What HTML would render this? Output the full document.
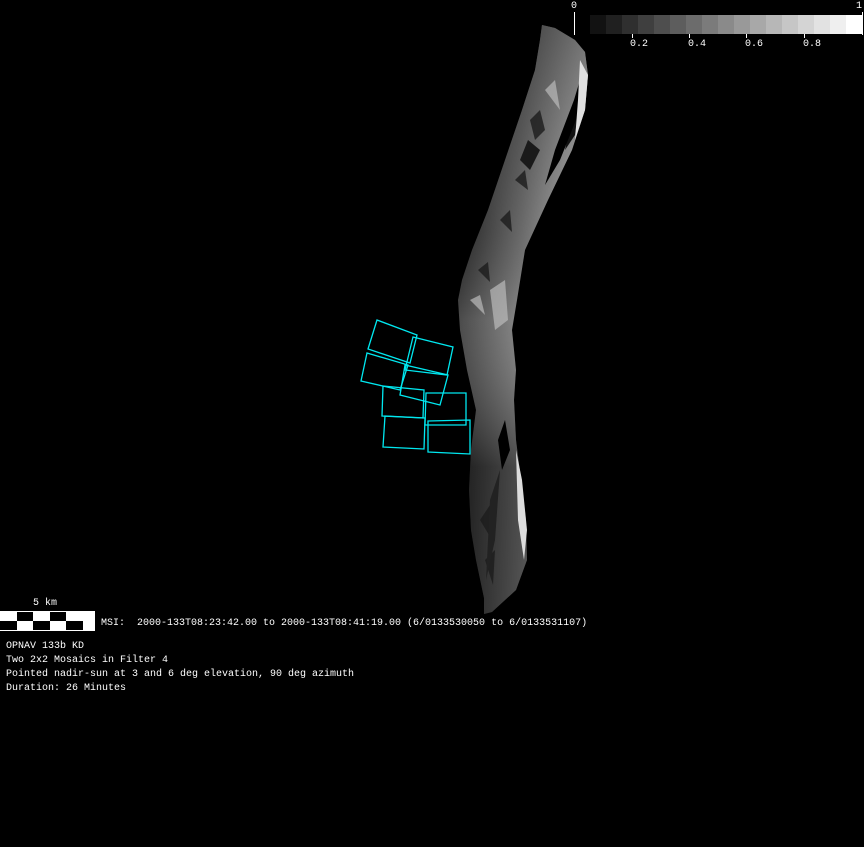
<!DOCTYPE html>
<html><head><meta charset="utf-8"><style>
html,body{margin:0;padding:0;background:#000;width:864px;height:847px;overflow:hidden}
.t{position:absolute;color:#fff;font-family:"Liberation Mono","DejaVu Sans Mono",monospace;font-size:10px;letter-spacing:0px;white-space:pre;line-height:14px}
</style></head><body>
<svg width="864" height="847" style="position:absolute;left:0;top:0" xmlns="http://www.w3.org/2000/svg">
<defs>
<linearGradient id="g" x1="0" y1="0" x2="1" y2="0">
<stop offset="0" stop-color="#2a2a2a"/><stop offset="0.5" stop-color="#777"/><stop offset="1" stop-color="#cfcfcf"/>
</linearGradient>
<linearGradient id="g2" x1="0" y1="0" x2="0" y2="1">
<stop offset="0" stop-color="#000" stop-opacity="0.45"/><stop offset="0.35" stop-color="#000" stop-opacity="0.1"/><stop offset="0.5" stop-color="#fff" stop-opacity="0.15"/><stop offset="0.75" stop-color="#000" stop-opacity="0.35"/><stop offset="1" stop-color="#000" stop-opacity="0.3"/>
</linearGradient>
</defs>
<polygon fill="url(#g)" points="542,25 555,28 575,40 585,52 588,75 585,110 572,150 548,200 525,250 517,300 512,330 516,370 514,400 516,440 521,480 526,520 527,560 516,590 492,612 484,614 484,598 476,560 471,530 469,490 471,450 476,410 467,370 460,330 458,300 462,280 472,250 488,210 505,160 522,110 535,70 540,40"/>
<polygon fill="url(#g2)" points="542,25 555,28 575,40 585,52 588,75 585,110 572,150 548,200 525,250 517,300 512,330 516,370 514,400 516,440 521,480 526,520 527,560 516,590 492,612 484,614 484,598 476,560 471,530 469,490 471,450 476,410 467,370 460,330 458,300 462,280 472,250 488,210 505,160 522,110 535,70 540,40"/>
<g fill="#1c1c1c" opacity="0.8">
<polygon points="530,120 540,110 545,130 535,140"/>
<polygon points="515,180 525,170 528,190"/>
<polygon points="500,220 510,210 512,232"/>
<polygon points="478,270 488,262 490,282"/>
<polygon points="480,520 490,505 492,540"/>
<polygon points="485,560 495,550 493,585"/>
</g>
<g fill="#bbb" opacity="0.7">
<polygon points="490,290 505,280 508,320 495,330"/>
<polygon points="470,300 480,295 485,315"/>
<polygon points="545,90 555,80 560,110"/>
</g>
<polygon fill="#111" points="572,115 580,100 575,135 565,150"/>
<polygon fill="#000" points="574,100 583,70 580,110 560,160 545,185 555,150"/>
<polygon fill="#000" points="515,330 520,300 530,260 540,225 525,285"/>
<polygon fill="#000" points="498,440 505,420 510,450 502,470"/>
<polygon fill="#222" points="490,500 500,470 495,540 486,580"/>
<polygon fill="#1a1a1a" points="528,140 540,150 530,170 520,160"/>
<polygon fill="#e0e0e0" points="580,60 588,75 585,110 575,140 578,100"/>
<polygon fill="#ddd" points="516,450 522,480 527,530 524,560 518,520"/>
<g fill="none" stroke="#00e8f0" stroke-width="1.3">
<polygon points="377,320 417,335 410,363 368,349"/>
<polygon points="367,353 408,365 400,390 361,381"/>
<polygon points="413,337 453,347 447,375 405,370"/>
<polygon points="405,365 448,375 440,405 400,395"/>
<polygon points="383,386 424,390 423,418 382,416"/>
<polygon points="426,393 466,393 466,425 425,425"/>
<polygon points="385,416 425,418 424,449 383,447"/>
<polygon points="428,421 470,420 470,454 428,452"/>
</g>
<g>
<rect x="590" y="15" width="16" height="19" fill="#121212"/>
<rect x="606" y="15" width="16" height="19" fill="#202020"/>
<rect x="622" y="15" width="16" height="19" fill="#2f2f2f"/>
<rect x="638" y="15" width="16" height="19" fill="#3f3f3f"/>
<rect x="654" y="15" width="16" height="19" fill="#4e4e4e"/>
<rect x="670" y="15" width="16" height="19" fill="#5d5d5d"/>
<rect x="686" y="15" width="16" height="19" fill="#6c6c6c"/>
<rect x="702" y="15" width="16" height="19" fill="#7b7b7b"/>
<rect x="718" y="15" width="16" height="19" fill="#8a8a8a"/>
<rect x="734" y="15" width="16" height="19" fill="#999"/>
<rect x="750" y="15" width="16" height="19" fill="#a8a8a8"/>
<rect x="766" y="15" width="16" height="19" fill="#b7b7b7"/>
<rect x="782" y="15" width="16" height="19" fill="#c6c6c6"/>
<rect x="798" y="15" width="16" height="19" fill="#d4d4d4"/>
<rect x="814" y="15" width="16" height="19" fill="#e2e2e2"/>
<rect x="830" y="15" width="16" height="19" fill="#efefef"/>
<rect x="846" y="15" width="16" height="19" fill="#fff"/>
</g>
<g stroke="#fff" stroke-width="1">
<line x1="574.5" y1="12" x2="574.5" y2="35"/>
<line x1="862.5" y1="12" x2="862.5" y2="35"/>
<line x1="632.5" y1="34" x2="632.5" y2="38"/>
<line x1="689.5" y1="34" x2="689.5" y2="38"/>
<line x1="746.5" y1="34" x2="746.5" y2="38"/>
<line x1="804.5" y1="34" x2="804.5" y2="38"/>
</g>
<rect x="0" y="611" width="95" height="20" fill="#fff"/>
<g fill="#000">
<rect x="17" y="612" width="16" height="9"/><rect x="50" y="612" width="16" height="9"/>
<rect x="0" y="621" width="17" height="9"/><rect x="33" y="621" width="17" height="9"/><rect x="66" y="621" width="17" height="9"/>
</g>
</svg>
<div class="t" style="left:571px;top:0px">0</div>
<div class="t" style="left:856px;top:0px">1</div>
<div class="t" style="left:630px;top:38px">0.2</div>
<div class="t" style="left:688px;top:38px">0.4</div>
<div class="t" style="left:745px;top:38px">0.6</div>
<div class="t" style="left:803px;top:38px">0.8</div>
<div class="t" style="left:33px;top:597px">5 km</div>
<div class="t" style="left:101px;top:617px">MSI:  2000-133T08:23:42.00 to 2000-133T08:41:19.00 (6/0133530050 to 6/0133531107)</div>
<div class="t" style="left:6px;top:640px">OPNAV 133b KD
Two 2x2 Mosaics in Filter 4
Pointed nadir-sun at 3 and 6 deg elevation, 90 deg azimuth
Duration: 26 Minutes</div>
</body></html>
